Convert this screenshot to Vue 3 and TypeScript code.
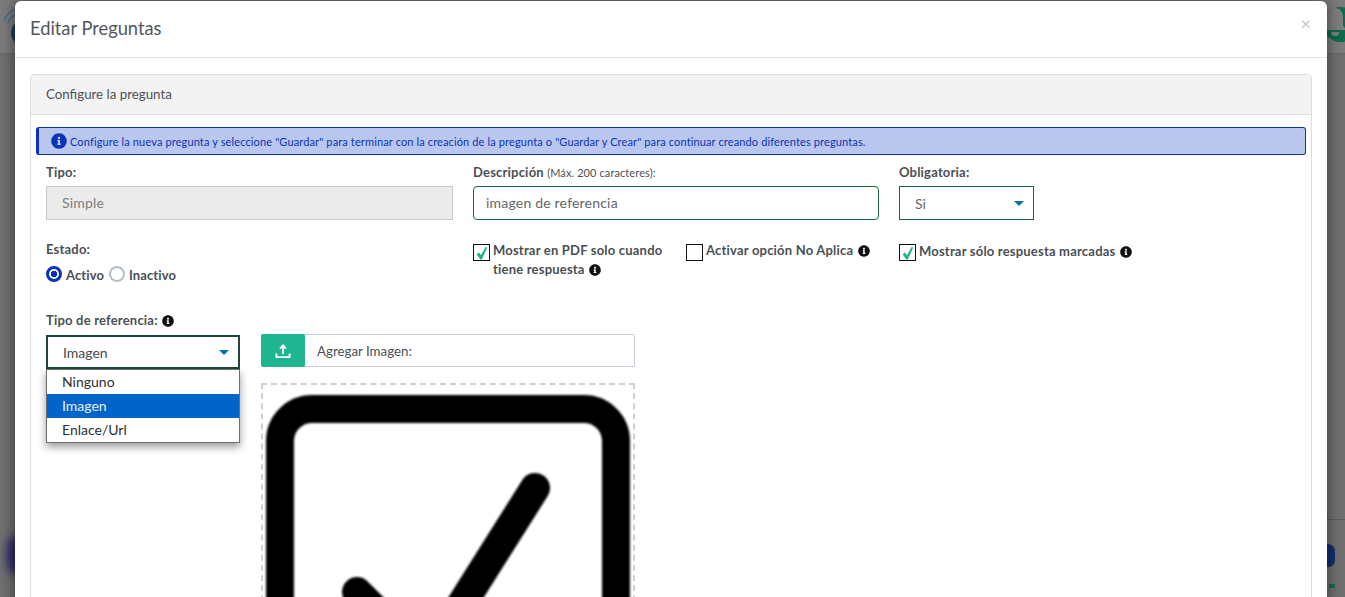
<script setup lang="ts">
const infoPath =
  'M256 8C119 8 8 119.1 8 256c0 137 111 248 248 248s248-111 248-248C504 119.1 393 8 256 8zm0 110c23.2 0 42 18.8 42 42s-18.8 42-42 42-42-18.8-42-42 18.8-42 42-42zm56 254c0 6.6-5.4 12-12 12h-88c-6.6 0-12-5.4-12-12v-24c0-6.6 5.4-12 12-12h12v-64h-12c-6.6 0-12-5.4-12-12v-24c0-6.6 5.4-12 12-12h64c6.6 0 12 5.4 12 12v100h12c6.6 0 12 5.4 12 12v24z'

const checkPath = 'M2.6 9.2L5 7.6l2 2.6L11.6 2l1.6.6-5.4 12h-1.4z'

const options = ['Ninguno', 'Imagen', 'Enlace/Url']
const selected = 'Imagen'
</script>

<template>
  <div class="page">
    <div class="bg-top">
      <svg class="bg-logo" width="30" height="50" viewBox="0 0 30 50">
        <circle cx="24" cy="30" r="11" fill="none" stroke="#1c3a66" stroke-width="4" />
        <path d="M4 18a20 20 0 0 1 11-12M8 20a14 14 0 0 1 7-8" fill="none" stroke="#4a6a8a" stroke-width="1.5" />
      </svg>
      <div class="bg-bell">
        <svg width="35" height="35" viewBox="5 0 35 35">
          <path d="M17 1c-5 0-8 4-8 9v8l-3 5h22l-3-5v-8c0-5-3-9-8-9zM13 25a4 4 0 0 0 8 0z" fill="#7f7f7f" />
        </svg>
      </div>
    </div>
    <div class="bg-blob-left"></div>
    <div class="bg-line-right"></div>
    <div class="bg-blob-right"></div>
    <div class="bg-mark-right"></div>

    <div class="modal">
      <div class="modal-header">
        <h4>Editar Preguntas</h4>
        <span class="close">×</span>
      </div>
      <div class="modal-body">
        <div class="panel">
          <div class="panel-heading">Configure la pregunta</div>
          <div class="panel-body">
            <div class="alert">
              <svg class="alert-icon" viewBox="0 0 512 512"><path :d="infoPath" /></svg>
              <span>Configure la nueva pregunta y seleccione "Guardar" para terminar con la creación de la pregunta o "Guardar y Crear" para continuar creando diferentes preguntas.</span>
            </div>

            <div class="form-row first">
              <div>
                <label class="lbl">Tipo:</label>
                <div class="input disabled">Simple</div>
              </div>
              <div>
                <label class="lbl">Descripción <small>(Máx. 200 caracteres):</small></label>
                <div class="input green">imagen de referencia</div>
              </div>
              <div>
                <label class="lbl">Obligatoria:</label>
                <div class="select green small">
                  <span>Si</span>
                  <i class="caret"></i>
                </div>
              </div>
            </div>

            <div class="form-row second">
              <div>
                <label class="lbl">Estado:</label>
                <div class="radios">
                  <span class="radio on"></span>
                  <span class="opt">Activo</span>
                  <span class="radio"></span>
                  <span class="opt">Inactivo</span>
                </div>
              </div>
              <div class="checks">
                <div class="check-item first-check">
                  <span class="box">
                    <svg viewBox="0 0 15 15"><path :d="checkPath" /></svg>
                  </span>
                  <span class="check-text">Mostrar en PDF solo cuando tiene respuesta
                    <svg class="info" viewBox="0 0 512 512"><path :d="infoPath" /></svg>
                  </span>
                </div>
                <div class="check-item">
                  <span class="box"></span>
                  <span class="check-text">Activar opción No Aplica
                    <svg class="info" viewBox="0 0 512 512"><path :d="infoPath" /></svg>
                  </span>
                </div>
              </div>
              <div class="check-item third-check">
                <span class="box">
                  <svg viewBox="0 0 15 15"><path :d="checkPath" /></svg>
                </span>
                <span class="check-text">Mostrar sólo respuesta marcadas
                  <svg class="info" viewBox="0 0 512 512"><path :d="infoPath" /></svg>
                </span>
              </div>
            </div>

            <div class="ref-row">
              <div class="ref-left">
                <label class="lbl">Tipo de referencia:
                  <svg class="info" viewBox="0 0 512 512"><path :d="infoPath" /></svg>
                </label>
                <div class="select dark">
                  <span>{{ selected }}</span>
                  <i class="caret"></i>
                  <ul class="menu">
                    <li v-for="o in options" :key="o" :class="{ active: o === selected }">{{ o }}</li>
                  </ul>
                </div>
              </div>
              <div class="ref-right">
                <div class="upload">
                  <span class="upload-btn">
                    <svg width="16" height="16" viewBox="0 0 16 16">
                      <path d="M8 11V3M5 5.6L8 2.4l3 3.2M1.4 10.5v3.6h13.2v-3.6" />
                    </svg>
                  </span>
                  <span class="upload-text">Agregar Imagen:</span>
                </div>
                <div class="preview">
                  <svg class="preview-img" viewBox="0 0 364 364">
                    <rect x="14" y="14" width="336" height="336" rx="32" />
                    <path class="tick" d="M91 197l69 69L269 93" />
                  </svg>
                </div>
              </div>
            </div>
          </div>
        </div>
      </div>
    </div>
  </div>
</template>

<style>
html,
body {
  margin: 0;
  height: 100%;
  overflow: hidden;
}
</style>

<style scoped>
.page {
  position: relative;
  height: 597px;
  overflow: hidden;
  background: #707070;
  font-family: Lato, "Liberation Sans", sans-serif;
  color: #4a4f55;
}
.bg-top {
  height: 53px;
  background: #7c7c7c;
  border-bottom: 1px solid #666;
}
.bg-logo {
  position: absolute;
  left: 0;
  top: 3px;
}
.bg-bell {
  position: absolute;
  left: 1323px;
  top: 7px;
  width: 35px;
  height: 35px;
  border-radius: 50%;
  overflow: hidden;
  background: #0f6b4f;
}
.bg-blob-left {
  position: absolute;
  left: 6px;
  top: 535px;
  width: 20px;
  height: 40px;
  border-radius: 50%;
  background: #2e2a6e;
  filter: blur(4px);
}
.bg-line-right {
  position: absolute;
  left: 1320px;
  right: 0;
  top: 519px;
  height: 1px;
  background: #5e5e5e;
}
.bg-blob-right {
  position: absolute;
  left: 1318px;
  top: 544px;
  width: 17px;
  height: 23px;
  border-radius: 7px;
  background: #12306e;
}
.bg-mark-right {
  position: absolute;
  left: 1329px;
  top: 584px;
  width: 6px;
  height: 4px;
  background: #1d6b4d;
}
.modal {
  position: absolute;
  left: 15px;
  top: 1px;
  width: 1312px;
  height: 800px;
  background: #fff;
  border-radius: 6px;
  box-shadow: 0 0 15px rgba(0, 0, 0, 0.55);
}
.modal-header {
  display: flex;
  align-items: center;
  justify-content: space-between;
  height: 57px;
  box-sizing: border-box;
  padding: 0 16px 3px 15px;
  border-bottom: 1px solid #e5e5e5;
}
.modal-header h4 {
  margin: 0;
  font-size: 18.3px;
  font-weight: 400;
  color: #53575c;
}
.close {
  font-size: 18px;
  color: #c4c4c4;
  margin-top: -10px;
}
.modal-body {
  padding: 16px 15px;
}
.panel {
  border: 1px solid #ddd;
  border-radius: 4px;
  height: 700px;
}
.panel-heading {
  height: 39px;
  line-height: 39px;
  padding-left: 15px;
  background: #f3f3f3;
  border-bottom: 1px solid #ddd;
  font-size: 13.3px;
  color: #4c5055;
  border-radius: 4px 4px 0 0;
}
.panel-body {
  padding: 12px 5px 0 5px;
}
.alert {
  display: flex;
  align-items: center;
  height: 28px;
  box-sizing: border-box;
  padding-left: 12px;
  background: #b9c6ee;
  border: 1px solid #0a33b5;
  border-left-width: 3px;
  border-radius: 3px;
  color: #0a33b5;
  font-size: 11px;
  letter-spacing: 0.13px;
  white-space: nowrap;
}
.alert-icon {
  width: 16px;
  height: 16px;
  margin-right: 3px;
  fill: #0a33b5;
}
.form-row {
  display: grid;
  grid-template-columns: 407px 406px 1fr;
  column-gap: 20px;
  padding-left: 10px;
}
.first {
  margin-top: 9px;
}
.second {
  margin-top: 21px;
}
.lbl {
  display: block;
  font-size: 13px;
  font-weight: 700;
  line-height: 17px;
  letter-spacing: 0.2px;
  color: #4a4f55;
}
.lbl small {
  font-size: 11px;
  font-weight: 400;
  letter-spacing: 0.1px;
}
.input {
  height: 34px;
  box-sizing: border-box;
  margin-top: 5px;
  padding-left: 12px;
  line-height: 32px;
  font-size: 14px;
  letter-spacing: 0.2px;
  color: #62666b;
  border-radius: 4px;
}
.disabled {
  padding-left: 15px;
  background: #ebebeb;
  border: 1px solid #c9c9c9;
  border-radius: 0;
  color: #7d7d7d;
}
.green {
  border: 1px solid #17693f;
}
.select {
  position: relative;
  display: flex;
  align-items: center;
  justify-content: space-between;
  box-sizing: border-box;
  height: 34px;
  font-size: 14px;
  color: #62666b;
}
.small {
  width: 135px;
  margin-top: 5px;
  padding: 0 9px 0 15px;
}
.dark {
  width: 194px;
  margin-top: 6px;
  padding: 0 9px 0 15px;
  border: 2px solid #1d4a32;
  color: #454a4f;
}
.caret {
  width: 0;
  height: 0;
  border-left: 5px solid transparent;
  border-right: 5px solid transparent;
  border-top: 5px solid #0076a8;
}
.menu {
  position: absolute;
  left: -2px;
  top: 32px;
  width: 194px;
  box-sizing: border-box;
  margin: 0;
  padding: 0;
  list-style: none;
  background: #fff;
  border: 1px solid #6e6e6e;
  box-shadow: 0 4px 8px rgba(0, 0, 0, 0.4);
  z-index: 2;
}
.menu li {
  height: 24px;
  line-height: 24px;
  padding-left: 15px;
  font-size: 14px;
  color: #2b2f33;
}
.menu li.active {
  background: #0064c8;
  color: #e9f1fb;
}
.radios {
  display: flex;
  align-items: center;
  margin-top: 7px;
  font-size: 13px;
  font-weight: 700;
  letter-spacing: 0.1px;
}
.radio {
  width: 16px;
  height: 16px;
  box-sizing: border-box;
  border: 2px solid #b5bec4;
  border-radius: 50%;
  margin-right: 4px;
}
.radio.on {
  border: 3px solid #0a33b5;
  background: radial-gradient(circle, #0a33b5 0 3px, #fff 3.6px);
}
.opt {
  margin-right: 5px;
  padding-top: 2px;
}
.checks {
  display: flex;
  align-items: flex-start;
}
.check-item {
  display: flex;
  align-items: flex-start;
  font-size: 13px;
  font-weight: 700;
  line-height: 19px;
  letter-spacing: 0.2px;
}
.first-check {
  width: 213px;
}
.box {
  flex: none;
  width: 15px;
  height: 15px;
  margin: 3px 3px 0 0;
  border: 1px solid #111;
  background: #fff;
}
.box svg {
  display: block;
}
.box path {
  fill: #1fb08a;
}
.check-text {
  max-width: 180px;
}
.third-check .check-text {
  max-width: none;
  padding-top: 1px;
}
.info {
  width: 12px;
  height: 12px;
  margin-left: 1px;
  vertical-align: -1.5px;
  fill: #111;
}
.ref-row {
  display: flex;
  margin-top: 29px;
  padding-left: 10px;
}
.ref-left {
  width: 194px;
  margin-right: 21px;
}
.ref-right {
  width: 374px;
  padding-top: 22px;
}
.upload {
  display: flex;
  align-items: center;
  height: 33px;
  box-sizing: border-box;
  border: 1px solid #c5ced8;
  border-radius: 2px;
  font-size: 13.3px;
  color: #4a4f55;
}
.upload-btn {
  display: flex;
  align-items: center;
  justify-content: center;
  width: 44px;
  height: 33px;
  margin-left: -1px;
  background: #20b591;
  border-radius: 2px;
}
.upload-btn path {
  fill: none;
  stroke: #fff;
  stroke-width: 1.8;
}
.upload-text {
  margin-left: 12px;
}
.preview {
  margin-top: 16px;
  height: 400px;
  box-sizing: border-box;
  padding: 10px 3px 0 3px;
  border: 2px dashed #d0d0d0;
}
.preview-img {
  display: block;
  width: 364px;
  height: 364px;
  filter: blur(1px);
}
.preview-img rect,
.preview-img path {
  fill: none;
  stroke: #000;
  stroke-width: 28;
  stroke-linecap: round;
  stroke-linejoin: round;
}
.preview-img .tick {
  stroke-width: 30;
}
</style>
